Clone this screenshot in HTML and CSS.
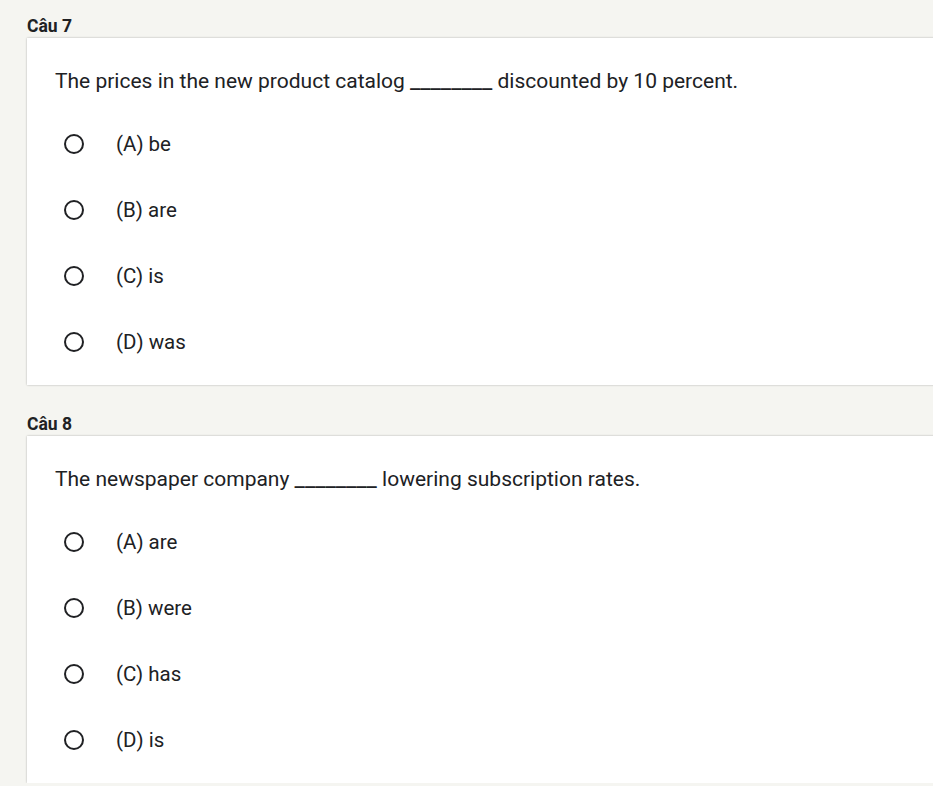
FILE: index.html
```html
<!DOCTYPE html>
<html lang="vi">
<head>
<meta charset="utf-8">
<title>Quiz</title>
<link rel="stylesheet" href="styles.css">
</head>
<body>
<main class="page">
  <section class="question">
    <h2 class="q-title">Câu 7</h2>
    <div class="card">
      <p class="q-text">The prices in the new product catalog <span class="blank">________</span> discounted by 10 percent.</p>
      <ul class="options">
        <li class="option"><span class="radio"></span><span class="label">(A) be</span></li>
        <li class="option"><span class="radio"></span><span class="label">(B) are</span></li>
        <li class="option"><span class="radio"></span><span class="label">(C) is</span></li>
        <li class="option"><span class="radio"></span><span class="label">(D) was</span></li>
      </ul>
    </div>
  </section>
  <section class="question">
    <h2 class="q-title">Câu 8</h2>
    <div class="card">
      <p class="q-text">The newspaper company <span class="blank">________</span> lowering subscription rates.</p>
      <ul class="options">
        <li class="option"><span class="radio"></span><span class="label">(A) are</span></li>
        <li class="option"><span class="radio"></span><span class="label">(B) were</span></li>
        <li class="option"><span class="radio"></span><span class="label">(C) has</span></li>
        <li class="option"><span class="radio"></span><span class="label">(D) is</span></li>
      </ul>
    </div>
  </section>
</main>
</body>
</html>
```
FILE: styles.css
```css
html, body {
  margin: 0;
  padding: 0;
  background: #f5f5f1;
  overflow: hidden;
}
body {
  font-family: Roboto, "Liberation Sans", sans-serif;
  color: #202124;
}
.page {
  display: flex;
  flex-direction: column;
  gap: 29px;
  padding: 16px 0 0 27px;
}
.question {
  display: flex;
  flex-direction: column;
}
.q-title {
  margin: 0 0 2px 0;
  font-size: 17.5px;
  font-weight: 700;
  line-height: 20px;
  color: #202124;
}
.card {
  background: #fff;
  width: 1000px;
  box-shadow: 0 0 2px rgba(0,0,0,0.28);
  padding: 31px 0 10px 28px;
}
.q-text {
  margin: 0;
  font-size: 21px;
  line-height: 24px;
  color: #202124;
}
.blank {
  font-size: 22.8px;
}
.options {
  list-style: none;
  margin: 18px 0 0 0;
  padding: 0;
}
.option {
  display: flex;
  align-items: center;
  height: 66px;
  padding-left: 9px;
}
.radio {
  width: 16px;
  height: 16px;
  border: 2px solid #202124;
  border-radius: 50%;
  flex: none;
}
.label {
  margin-left: 32px;
  font-size: 20.5px;
  line-height: 24px;
}
```
